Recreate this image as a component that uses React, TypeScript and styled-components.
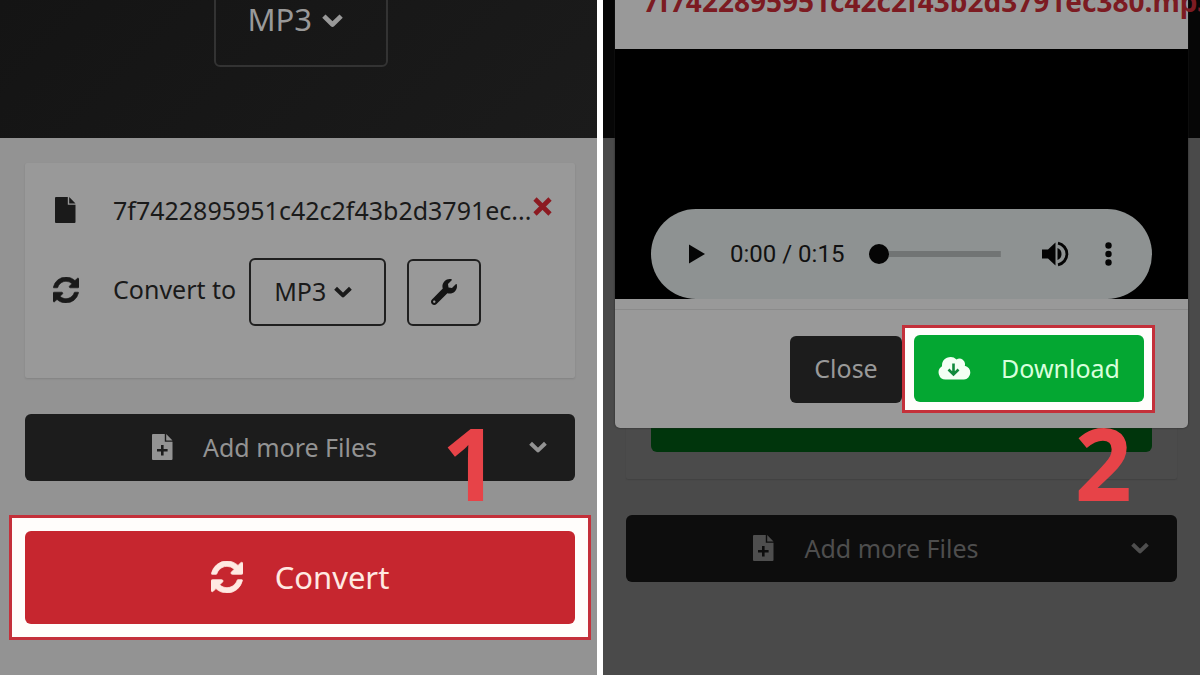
import React from "react";
import styled, { createGlobalStyle, css } from "styled-components";
import { FaWrench } from "react-icons/fa";

const GlobalStyle = createGlobalStyle`
  *, *::before, *::after { box-sizing: border-box; }
  body { margin: 0; background: #fff; font-family: "Noto Sans", "Open Sans", sans-serif; }
  button, select, input { font-family: inherit; margin: 0; }
`;

const Comparison = styled.main`
  display: flex;
  gap: 6px;
  min-height: 100vh;
  overflow: hidden;
`;

const Panel = styled.section<{ $dimmed?: boolean }>`
  position: relative;
  flex: 1;
  min-width: 0;
  overflow: hidden;
  background: ${(p) => (p.$dimmed ? "#4a4a4a" : "#939393")};
`;

const Hero = styled.header<{ $dimmed?: boolean }>`
  display: flex;
  align-items: flex-end;
  justify-content: center;
  height: 138px;
  padding: 0 0 71px 4px;
  overflow: hidden;
  background: ${(p) => (p.$dimmed ? "#060606" : "linear-gradient(135deg, #141414, #1b1b1b)")};
`;

const Content = styled.div<{ $dimmed?: boolean }>`
  display: flex;
  flex-direction: column;
  padding: ${(p) => (p.$dimmed ? "25px 23px 36px" : "25px 22px 36px 25px")};
`;

const Card = styled.div<{ $dimmed?: boolean }>`
  margin-bottom: 36px;
  border-radius: 2px;
  ${(p) =>
    p.$dimmed
      ? css`
          padding: 220px 25px 27px;
          background: #4b4b4b;
          box-shadow: 0 1px 1px #424242;
        `
      : css`
          height: 215px;
          padding: 24px 23px 0 28px;
          background: #999;
          box-shadow: 0 1px 2px #828282;
        `}
`;

const FileRow = styled.div`
  display: grid;
  grid-template-columns: 60px minmax(0, 1fr) auto;
  align-items: center;
  min-height: 46px;
  color: #1a1a1a;
  font-size: 25px;
  line-height: 36px;

  & > svg { margin-left: 2px; }
`;

const FileName = styled.span`
  overflow: hidden;
  text-overflow: ellipsis;
  white-space: nowrap;
`;

const RemoveButton = styled.button`
  display: flex;
  padding: 0;
  margin-bottom: 8px;
  border: 0;
  background: none;
  color: #8c1a21;
`;

const ConvertRow = styled.div`
  display: flex;
  align-items: center;
  margin-top: 25px;
  color: #1a1a1a;
  font-size: 25px;

  & > svg { flex: none; width: 26px; margin: 0 34px 4px 0; }
  & > label { margin: 0 13px 6px 0; white-space: nowrap; }
  & > button { margin-left: 21px; }
`;

const SelectBox = styled.span<{ $large?: boolean }>`
  position: relative;
  display: flex;
  flex: none;
  width: ${(p) => (p.$large ? 174 : 137)}px;
  height: ${(p) => (p.$large ? 94 : 68)}px;
  color: ${(p) => (p.$large ? "#999" : "#1a1a1a")};

  & > svg {
    position: absolute;
    right: ${(p) => (p.$large ? 45 : 34)}px;
    top: 0;
    bottom: 0;
    margin: auto;
    pointer-events: none;
  }
`;

const Select = styled.select<{ $large?: boolean }>`
  appearance: none;
  width: 100%;
  padding: 0 0 2px ${(p) => (p.$large ? 32 : 23)}px;
  border: 2px solid ${(p) => (p.$large ? "#333" : "#1f1f1f")};
  border-radius: 6px;
  background: none;
  color: inherit;
  font-size: ${(p) => (p.$large ? 31 : 25)}px;
`;

const ToolButton = styled.button`
  display: flex;
  align-items: center;
  justify-content: center;
  flex: none;
  width: 74px;
  height: 67px;
  border: 2px solid #1f1f1f;
  border-radius: 6px;
  background: none;
  color: #141414;
`;

const AddButton = styled.button<{ $dimmed?: boolean }>`
  display: grid;
  grid-template-columns: 1fr auto 1fr;
  align-items: center;
  height: 67px;
  padding: 0 28px 2px 8px;
  border: 0;
  border-radius: 6px;
  background: ${(p) => (p.$dimmed ? "#0d0d0d" : "#1c1c1c")};
  color: ${(p) => (p.$dimmed ? "#4e4e4e" : "#939393")};
  font-size: 25px;
  line-height: 36px;

  & > svg:first-child { justify-self: end; margin-right: 30px; }
  & > svg:last-child { justify-self: end; }
`;

const Highlight = styled.div<{ $wide?: boolean }>`
  position: relative;
  display: flex;
  border: 3px solid #c4303a;
  background: #fffdfb;
  ${(p) =>
    p.$wide
      ? css`
          margin: 34px -16px 0;
          padding: 13px;
        `
      : css`
          padding: 7px 8px 8px 9px;
        `}
`;

const ActionButton = styled.button<{ $tone: "convert" | "download" | "close" }>`
  display: flex;
  align-items: center;
  justify-content: center;
  height: 67px;
  padding: 0 0 2px;
  border: 0;
  border-radius: 6px;
  font-size: 25px;
  line-height: 36px;
  ${(p) =>
    ({
      convert: css`
        flex: 1;
        gap: 32px;
        height: 93px;
        background: #c6262f;
        color: #ffe9e2;
        font-size: 31px;
      `,
      download: css`
        gap: 30px;
        width: 230px;
        background: #04a732;
        color: #d8ffdc;
      `,
      close: css`
        width: 112px;
        background: #1c1c1c;
        color: #999;
      `,
    })[p.$tone]}
`;

const Step = styled.span<{ $below?: boolean }>`
  position: absolute;
  z-index: 1;
  color: #e74348;
  font-size: 100px;
  font-weight: 700;
  line-height: 100px;
  pointer-events: none;
  ${(p) =>
    p.$below
      ? css`
          right: 20px;
          top: 84px;
        `
      : css`
          right: 89px;
          bottom: 125px;
        `}
`;

const ReadyBar = styled.div`
  height: 69px;
  border-radius: 6px;
  background: #00350c;
`;

const Dialog = styled.div`
  position: absolute;
  top: -30px;
  left: 12px;
  right: 12px;
  border-radius: 5px;
  background: #999;
  box-shadow: 0 0 2px #222;
`;

const DialogTitle = styled.h2`
  height: 79px;
  margin: 0;
  padding: 13px 28px 0;
  color: #7c1b22;
  font-size: 28px;
  line-height: 36px;
  white-space: nowrap;
`;

const Preview = styled.div`
  display: flex;
  align-items: flex-end;
  height: 250px;
  padding: 0 36px;
  background: #000;
`;

const Player = styled.div`
  display: flex;
  align-items: center;
  flex: 1;
  min-width: 0;
  height: 90px;
  padding: 0 40px 0 38px;
  border-radius: 45px;
  background: #8e9292;
  color: #111;
`;

const PlayerButton = styled.button`
  display: flex;
  padding: 0;
  border: 0;
  background: none;
  color: #050505;

  & + & { margin-left: 36px; }
`;

const Time = styled.span`
  margin: 0 25px;
  font-family: Roboto, sans-serif;
  font-size: 24px;
  white-space: nowrap;
`;

const Seek = styled.input`
  appearance: none;
  flex: 1;
  min-width: 0;
  height: 20px;
  margin-right: 41px;
  background: linear-gradient(#717474, #717474) center / 100% 6px no-repeat;

  &::-webkit-slider-thumb {
    appearance: none;
    width: 20px;
    height: 20px;
    border-radius: 50%;
    background: #050505;
  }
`;

const DialogFooter = styled.footer`
  display: flex;
  align-items: center;
  justify-content: flex-end;
  height: 119px;
  margin-top: 10px;
  padding: 0 33px 0 0;
  border-top: 1px solid #8b8b8b;
`;

const Chevron = ({ size = 18 }: { size?: number }) => (
  <svg width={size} height={size} viewBox="0 0 18 18" fill="none" stroke="currentColor" strokeWidth="4" aria-hidden="true">
    <path d="M1.6 5.2 9 12.4l7.4-7.2" strokeLinejoin="round" />
  </svg>
);

const RefreshIcon = ({ size }: { size: number }) => (
  <svg width={size} height={size} viewBox="0 128 1536 1536" fill="currentColor" aria-hidden="true">
    <path
      stroke="currentColor"
      strokeWidth="36"
      d="M1511 1056q0 5-1 7-64 268-268 434.500t-478 166.500q-146 0-282.500-55t-243.500-157l-129 129q-19 19-45 19t-45-19-19-45v-448q0-26 19-45t45-19h448q26 0 45 19t19 45-19 45l-137 137q71 66 161 102t187 36q134 0 250-65t186-179q11-17 53-117 8-23 30-23h192q13 0 22.500 9.500t9.500 22.500zm25-800v448q0 26-19 45t-45 19h-448q-26 0-45-19t-19-45 19-45l138-138q-148-137-349-137-134 0-250 65t-186 179q-11 17-53 117-8 23-30 23h-199q-13 0-22.500-9.500t-9.500-22.500v-7q65-268 270-434.500t480-166.500q146 0 284 55.500t245 156.500l130-129q19-19 45-19t45 19 19 45z"
    />
  </svg>
);

const FileIcon = ({ plus = false }: { plus?: boolean }) => (
  <svg width="21" height="26" viewBox="0 0 21 26" fill="currentColor" aria-hidden="true">
    <path
      fillRule="evenodd"
      d={
        "M1 0h11.800v7.800h7.700v17.200a1 1 0 0 1-1 1H1a1 1 0 0 1-1-1V1a1 1 0 0 1 1-1ZM14.200 0l6.300 6.400h-6.300Z" +
        (plus ? "M9 11v4H5v2.600h4v4h2.600v-4h4v-2.600h-4v-4Z" : "")
      }
    />
  </svg>
);

const Cross = () => (
  <svg width="19" height="19" viewBox="0 0 19 19" stroke="currentColor" strokeWidth="4.600" aria-hidden="true">
    <path d="m2 2 15 15M17 2 2 17" />
  </svg>
);

const PlayIcon = () => (
  <svg width="16" height="20" viewBox="0 0 16 20" fill="currentColor" aria-hidden="true">
    <path d="M0 0.500 16 10 0 19.500Z" />
  </svg>
);

const VolumeIcon = () => (
  <svg width="27" height="26" viewBox="0 0 27 26" fill="currentColor" aria-hidden="true">
    <path d="M0 8.500h6L13.500 1.500v23L6 17.500H0Z" />
    <path d="M15.500 7a6.500 6.500 0 0 1 0 12Z" />
    <path d="M16 2.200a11 11 0 0 1 0 21.600" fill="none" stroke="currentColor" strokeWidth="2.800" />
  </svg>
);

const MoreIcon = () => (
  <svg width="7" height="24" viewBox="0 0 7 24" fill="currentColor" aria-hidden="true">
    <circle cx="3.500" cy="3.500" r="3.200" />
    <circle cx="3.500" cy="12" r="3.200" />
    <circle cx="3.500" cy="20.500" r="3.200" />
  </svg>
);

const CloudIcon = () => (
  <svg width="33" height="24" viewBox="0 0 33 24" aria-hidden="true">
    <path
      fill="#f4fff4"
      d="M7.500 23.500A7.200 7.200 0 0 1 4 10.200 8.600 8.600 0 0 1 18.500 3.400a5.600 5.600 0 0 1 8.300 6.300A7 7 0 0 1 26 23.500Z"
    />
    <path d="M15.500 7.500v11M10.500 13.500l5 5 5-5" fill="none" stroke="#118a3c" strokeWidth="2.600" />
  </svg>
);

function FormatSelect({ id, large }: { id: string; large?: boolean }) {
  return (
    <SelectBox $large={large}>
      <Select id={id} $large={large} aria-label={large ? "Target format" : undefined} defaultValue="MP3">
        <option>MP3</option>
      </Select>
      <Chevron size={large ? 21 : 18} />
    </SelectBox>
  );
}

function AddFiles({ dimmed }: { dimmed?: boolean }) {
  return (
    <AddButton type="button" $dimmed={dimmed}>
      <FileIcon plus />
      <span>Add more Files</span>
      <Chevron />
    </AddButton>
  );
}

export default function App() {
  return (
    <>
      <GlobalStyle />
      <Comparison>
        <Panel>
          <Hero>
            <FormatSelect id="target" large />
          </Hero>
          <Content>
            <Card>
              <FileRow>
                <FileIcon />
                <FileName>7f7422895951c42c2f43b2d3791ec...</FileName>
                <RemoveButton type="button" aria-label="Remove file">
                  <Cross />
                </RemoveButton>
              </FileRow>
              <ConvertRow>
                <RefreshIcon size={26} />
                <label htmlFor="format">Convert to</label>
                <FormatSelect id="format" />
                <ToolButton type="button" aria-label="Settings">
                  <FaWrench size={26} />
                </ToolButton>
              </ConvertRow>
            </Card>
            <AddFiles />
            <Highlight $wide>
              <Step>1</Step>
              <ActionButton type="button" $tone="convert">
                <RefreshIcon size={32} />
                Convert
              </ActionButton>
            </Highlight>
          </Content>
        </Panel>

        <Panel $dimmed>
          <Hero $dimmed />
          <Content $dimmed>
            <Card $dimmed>
              <ReadyBar />
            </Card>
            <AddFiles dimmed />
          </Content>
          <Dialog role="dialog" aria-labelledby="preview-title">
            <DialogTitle id="preview-title">7f7422895951c42c2f43b2d3791ec380.mp3</DialogTitle>
            <Preview>
              <Player>
                <PlayerButton type="button" aria-label="Play">
                  <PlayIcon />
                </PlayerButton>
                <Time>0:00 / 0:15</Time>
                <Seek type="range" min={0} max={15} defaultValue={0} aria-label="Seek" />
                <PlayerButton type="button" aria-label="Mute">
                  <VolumeIcon />
                </PlayerButton>
                <PlayerButton type="button" aria-label="More options">
                  <MoreIcon />
                </PlayerButton>
              </Player>
            </Preview>
            <DialogFooter>
              <ActionButton type="button" $tone="close">
                Close
              </ActionButton>
              <Highlight>
                <ActionButton type="button" $tone="download">
                  <CloudIcon />
                  Download
                </ActionButton>
                <Step $below>2</Step>
              </Highlight>
            </DialogFooter>
          </Dialog>
        </Panel>
      </Comparison>
    </>
  );
}
